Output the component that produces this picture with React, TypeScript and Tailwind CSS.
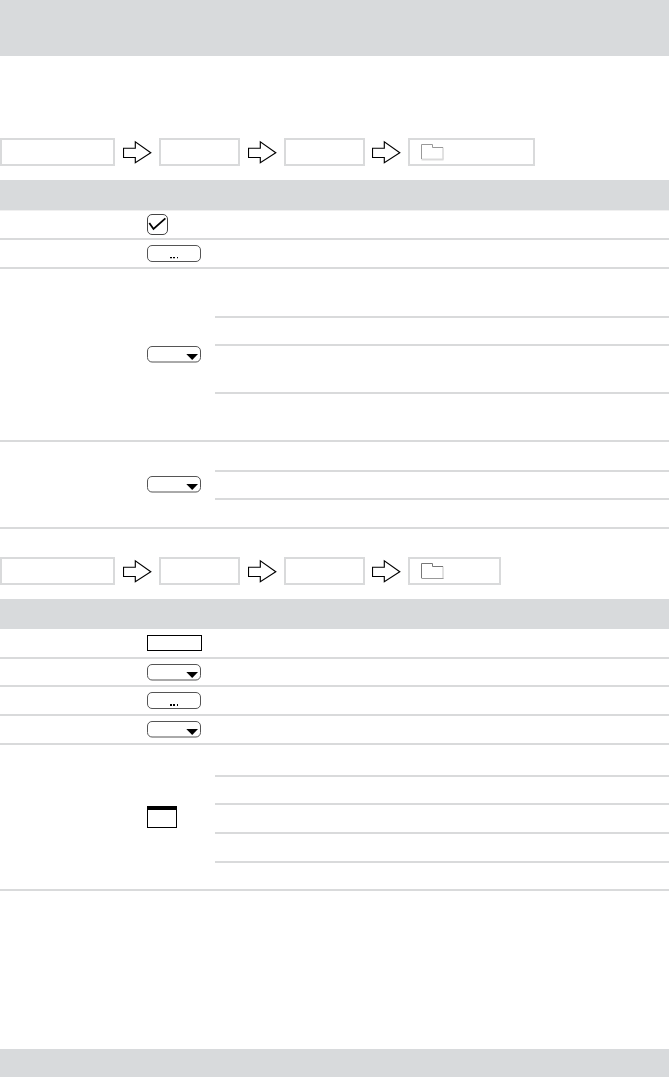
import type { ReactNode } from 'react';

function ArrowIcon() {
  return (
    <svg width="29" height="24" viewBox="0 0 29 24" fill="none" stroke="#000" strokeWidth="1.15">
      <path d="M0.5 8.2H12.3V1.8L27.8 12.7L12.3 22.8V17.5H0.5Z" />
    </svg>
  );
}

function FolderIcon({ dark }: { dark?: boolean }) {
  return (
    <svg width="23" height="17" viewBox="0 0 23 17" fill="none" strokeWidth="1">
      <path d="M22 3.5V15.5" stroke="#c4c4c4" />
      <path
        d="M0.5 15.5H22.5"
        stroke={dark ? '#999' : '#dadada'}
        strokeWidth={dark ? 1 : 2}
      />
      <path d="M0.5 15V0.5H11.5V3.5H22" stroke={dark ? '#777' : '#999'} />
    </svg>
  );
}

function CheckIcon() {
  return (
    <svg width="21" height="21" viewBox="0 0 21 21" fill="none" stroke="#000">
      <rect x="0.5" y="0.5" width="20" height="20" rx="4.5" stroke="#444" strokeWidth="1" />
      <path d="M2.3 9L6.5 15L18.4 4.4" strokeWidth="1.8" />
    </svg>
  );
}

function ButtonIcon({ bold }: { bold?: boolean }) {
  return (
    <svg width="54" height="17" viewBox="0 0 54 17" fill="none">
      <rect x="0.5" y="0.5" width="53" height="16" rx="4.5" stroke="#555" strokeWidth="1" />
      <path
        d={
          bold
            ? 'M23 12h2v2h-2zM26 12h2v2h-2zM30 12h1v2h-1z'
            : 'M23 12h2v1.3h-2zM26 12h2v1.3h-2zM30 12h1v1.3h-1z'
        }
        fill="#000"
      />
    </svg>
  );
}

function SelectIcon() {
  return (
    <svg width="54" height="17" viewBox="0 0 54 17" fill="none">
      <rect x="0.5" y="0.5" width="53" height="15.5" rx="4.5" stroke="#555" strokeWidth="1" />
      <path d="M39.3 8H51L45.2 14Z" fill="#000" />
    </svg>
  );
}

function InputIcon() {
  return <div className="h-4 w-[55px] border border-black" />;
}

function WindowIcon() {
  return <div className="h-[22px] w-[30px] border border-t-4 border-black" />;
}

function Breadcrumb({ lastWidth, dark }: { lastWidth: string; dark?: boolean }) {
  return (
    <div className="flex h-7 items-center">
      <div className="h-7 w-[115px] border-2 border-[#d9dadb]" />
      <div className="flex w-11 pl-2">
        <ArrowIcon />
      </div>
      <div className="h-7 w-[81px] border-2 border-[#d9dadb]" />
      <div className="flex w-11 pl-[7.5px]">
        <ArrowIcon />
      </div>
      <div className="h-7 w-[81px] border-2 border-[#d9dadb]" />
      <div className="flex w-[43px] pl-[7px]">
        <ArrowIcon />
      </div>
      <div className={`flex h-7 items-center border-2 border-[#d9dadb] pl-[11px] ${lastWidth}`}>
        <FolderIcon dark={dark} />
      </div>
    </div>
  );
}

interface RowProps {
  icon: ReactNode;
  height: string;
  // heights of the ruled lines in the description column
  lines?: string[];
}

function Row({ icon, height, lines = [] }: RowProps) {
  return (
    <div className={`flex border-b-2 border-[#d9dadb] ${height}`}>
      <div className="flex w-[215px] items-center pl-[147px]">{icon}</div>
      <div className="flex-1">
        {lines.map((line, index) => (
          <div key={index} className={`border-b-2 border-[#d9dadb] ${line}`} />
        ))}
      </div>
    </div>
  );
}

export default function App() {
  return (
    <div className="flex h-[1077px] w-[669px] flex-col bg-white">
      <header className="h-14 bg-[#d8dadc]" />

      <main className="flex-1 pt-[82px]">
        <section>
          <Breadcrumb lastWidth="w-[127px]" />
          <div className="mt-3.5 h-[30px] bg-[#d8dadc]" />
          <Row icon={<CheckIcon />} height="h-[30px] border-t border-t-[#f0f0f0]" />
          <Row icon={<ButtonIcon />} height="h-[29px]" />
          <Row
            icon={<SelectIcon />}
            height="h-[173px]"
            lines={['h-[49px]', 'h-7', 'h-12']}
          />
          <Row icon={<SelectIcon />} height="h-[87px]" lines={['h-[30px]', 'h-7']} />
        </section>

        <section className="mt-7">
          <Breadcrumb lastWidth="w-[93px]" dark />
          <div className="mt-3.5 h-[30px] bg-[#d8dadc]" />
          <Row icon={<InputIcon />} height="h-[30px]" />
          <Row icon={<SelectIcon />} height="h-7" />
          <Row icon={<ButtonIcon bold />} height="h-[29px]" />
          <Row icon={<SelectIcon />} height="h-[29px]" />
          <Row
            icon={<WindowIcon />}
            height="h-[146px]"
            lines={['h-8', 'h-7', 'h-[29px]', 'h-[29px]']}
          />
        </section>
      </main>

      <footer className="h-7 bg-[#d8dadc]" />
    </div>
  );
}
